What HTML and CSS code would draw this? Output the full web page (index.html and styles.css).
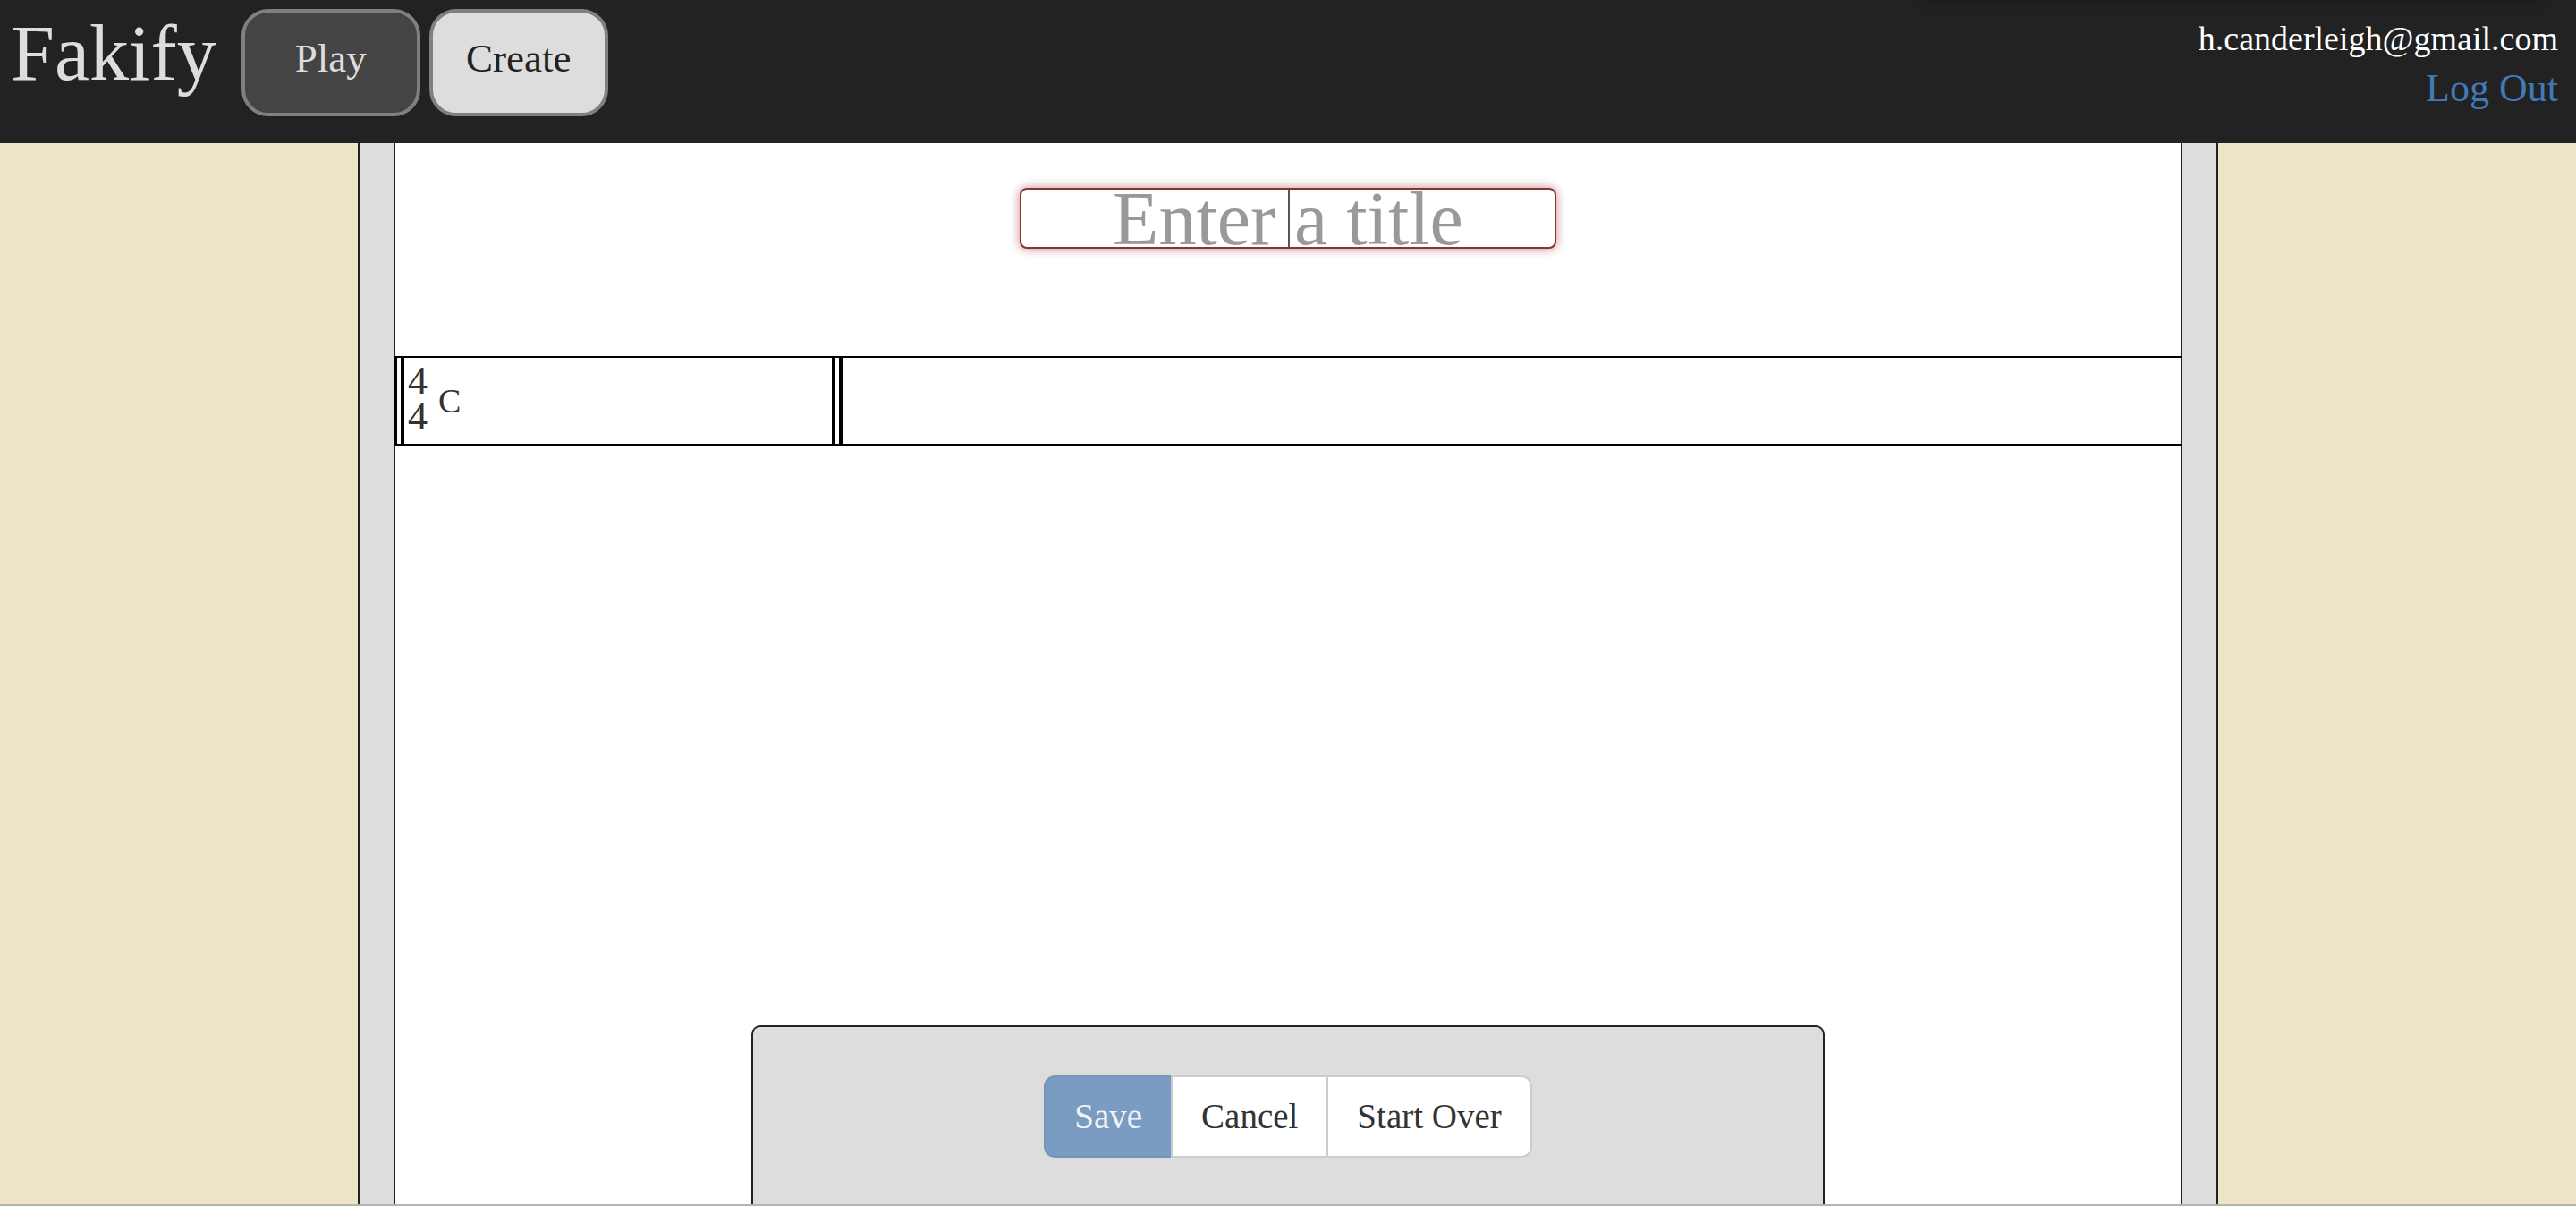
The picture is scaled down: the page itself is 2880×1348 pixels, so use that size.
FILE: index.html
```html
<!DOCTYPE html>
<html lang="en">
<head>
  <meta charset="utf-8">
  <title>Fakify</title>
  <link rel="stylesheet" href="styles.css">
</head>
<body>
  <header class="topbar">
    <div class="brand">Fakify</div>
    <nav class="tabs">
      <a class="tab" href="#play">Play</a>
      <a class="tab tab-active" href="#create">Create</a>
    </nav>
    <div class="account">
      <div class="email">h.canderleigh@gmail.com</div>
      <a class="logout" href="#logout">Log Out</a>
    </div>
  </header>
  <main class="desk">
    <div class="sheet">
      <div class="title-field">
        <input class="title-input" type="text" placeholder="Enter a title" aria-label="Title">
      </div>
      <div class="staff">
        <div class="measure">
          <div class="time"><span>4</span><span>4</span></div>
          <div class="chord">C</div>
        </div>
      </div>
      <div class="panel">
        <div class="actions">
          <button class="action save" type="button">Save</button>
          <button class="action" type="button">Cancel</button>
          <button class="action" type="button">Start Over</button>
        </div>
      </div>
    </div>
  </main>
</body>
</html>
```
FILE: styles.css
```css
* {
  box-sizing: border-box;
}

body {
  margin: 0;
  min-height: 100vh;
  display: flex;
  flex-direction: column;
  background: #eee5c8;
  border-bottom: 2px solid #b3b3b3;
  color: #333;
  font-family: "Liberation Serif", serif;
}

/* Header */
.topbar {
  position: relative;
  overflow: hidden;
  display: flex;
  height: 160px;
  padding: 0 20px 0 12px;
  background: #222;
}

.topbar::after {
  content: "";
  position: absolute;
  top: -12px;
  right: 44px;
  width: 680px;
  height: 12px;
  box-shadow: 0 0 16px rgba(0, 0, 0, 0.4);
}

.brand {
  margin-right: 28px;
  color: #ddd;
  font-size: 88px;
  line-height: 120px;
}

.tabs {
  display: flex;
  gap: 10px;
  padding-top: 10px;
}

.tab {
  width: 200px;
  height: 120px;
  border: 4px solid #808080;
  border-radius: 30px;
  background: #444;
  color: #ddd;
  font-size: 45px;
  line-height: 102px;
  text-align: center;
  text-decoration: none;
}

.tab-active {
  background: #ddd;
  color: #222;
}

.account {
  margin-left: auto;
  padding-top: 15px;
  text-align: right;
  line-height: 56px;
}

.email {
  color: #fff;
  font-size: 38px;
}

.logout {
  color: #427ab8;
  font-size: 44px;
  text-decoration: none;
}

/* Sheet of music on the desk */
.desk {
  flex: 1;
  display: flex;
  width: 100%;
  max-width: 2080px;
  margin: 0 auto;
  padding: 0 38px;
  border: solid #222;
  border-width: 0 2px;
  background: #ddd;
}

.sheet {
  flex: 1;
  display: flex;
  flex-direction: column;
  padding-top: 50px;
  border: solid #222;
  border-width: 0 2px;
  background: #fff;
}

.title-field {
  position: relative;
  align-self: center;
  width: 30%;
  min-width: 600px;
}

/* Text cursor in the middle of the empty title */
.title-field::after {
  content: "";
  position: absolute;
  top: 2px;
  bottom: 2px;
  left: 50%;
  width: 2px;
  background: #555;
}

.title-input {
  display: block;
  width: 100%;
  height: 68px;
  padding: 0;
  border: 2px solid #843534;
  border-radius: 8px;
  background: #fff;
  box-shadow: 0 0 12px #ce8483;
  color: #555;
  font-family: inherit;
  font-size: 84px;
  line-height: 64px;
  text-align: center;
}

.title-input::placeholder {
  color: #999;
  opacity: 1;
}

.staff {
  display: flex;
  margin: 120px -2px 0;
  border: solid #000;
  border-width: 2px 0;
}

.measure {
  display: flex;
  align-items: center;
  gap: 12px;
  width: calc(25% + 2px);
  height: 96px;
  padding-left: 4px;
  border: solid #000;
  border-width: 0 12px;
  border-style: none double;
}

.time {
  display: flex;
  flex-direction: column;
  padding-bottom: 4px;
  font-size: 44px;
  line-height: 40px;
}

.chord {
  font-size: 38px;
  line-height: 44px;
}

/* Action panel */
.panel {
  align-self: center;
  display: flex;
  justify-content: center;
  width: 60%;
  min-width: 1200px;
  margin-top: auto;
  padding: 54px 0 52px;
  border: 2px solid #222;
  border-bottom: 0;
  border-radius: 10px 10px 0 0;
  background: #ddd;
}

.actions {
  display: flex;
  border-radius: 12px;
  overflow: hidden;
}

.action {
  height: 92px;
  margin-left: -2px;
  padding: 0 32px;
  border: 2px solid #ccc;
  background: #fff;
  color: #333;
  font-family: inherit;
  font-size: 39px;
  line-height: 44px;
}

.action:last-child {
  border-radius: 0 12px 12px 0;
}

.save {
  margin-left: 0;
  border-color: #7395ba;
  border-radius: 12px 0 0 12px;
  background: #7a9cc2;
  color: #f2f2f2;
}
```
